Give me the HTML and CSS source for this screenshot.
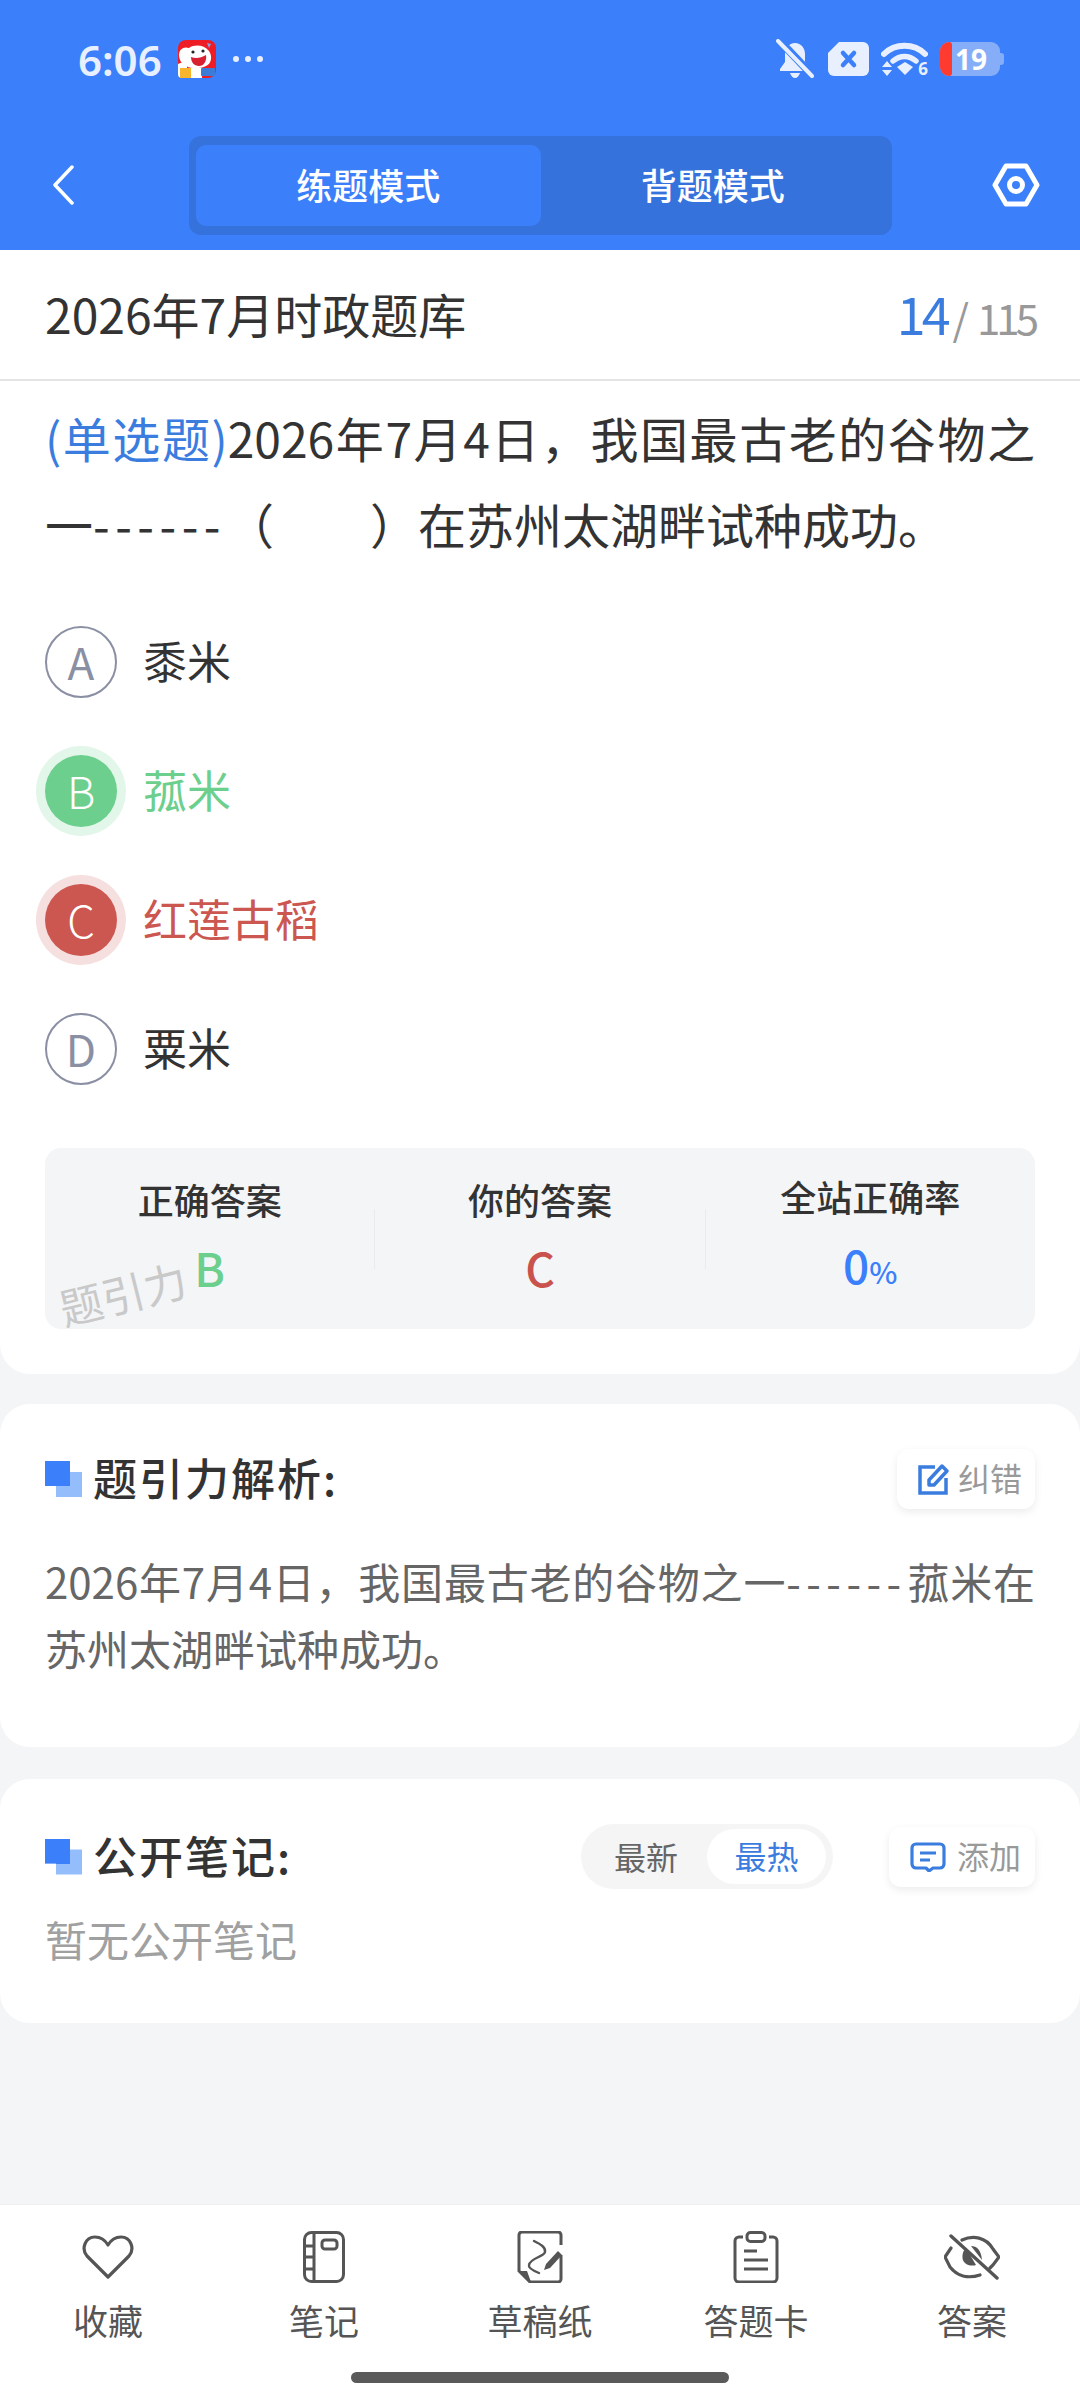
FILE: index.html
```html
<!DOCTYPE html>
<html>
  <head>
    <title>练题模式</title>
    <link rel="stylesheet" href="styles.css">
  </head>
  <body>
    <div class="page">
      <div class="header">
        <div class="status-bar">
          <div class="status-left">
            <span class="time">6:06</span>
            <svg class="app-icon" width="38" height="38" viewBox="0 0 38 38">
              <rect width="38" height="38" rx="8" fill="#ee1c25"/>
              <path d="M0 24c3-2 6-2 9 0v14H4a4 4 0 0 1-4-4z" fill="#fff"/>
              <path d="M1 15c0-6 5-9 10-7 6-4 15-3 20 3 4 6 2 13-3 15-6 3-15 3-20 0-4-2-7-6-7-11z" fill="#fff"/>
              <path d="M13 17c5 2 10 1 15-2 1 6-2 11-7 11-5 0-8-4-8-9z" fill="#d92030"/>
              <circle cx="15" cy="12" r="1.6" fill="#222"/>
              <circle cx="25" cy="11" r="1.6" fill="#222"/>
              <path d="M29 3l4 1-2 4z" fill="#7fa7e8"/>
              <rect x="2" y="28" width="11" height="10" fill="#f7b52c"/>
              <rect x="13" y="28" width="11" height="10" fill="#fff"/>
              <rect x="23" y="28" width="14" height="8" rx="1" fill="#3d7bd8"/>
            </svg>
            <svg class="dots" width="32" height="8" viewBox="0 0 32 8">
              <circle cx="4" cy="4" r="3" fill="#e8f0ff"/>
              <circle cx="16" cy="4" r="3" fill="#e8f0ff"/>
              <circle cx="28" cy="4" r="3" fill="#e8f0ff"/>
            </svg>
          </div>
          <div class="status-right">
            <svg width="38" height="40" viewBox="0 0 38 40">
              <path d="M19 4c-6 0-10 5-10 11v8l-5 7v2h30v-2l-5-7v-8c0-6-4-11-10-11z" fill="#e8f0ff"/>
              <path d="M14 34h10c-1 3-3 5-5 5s-4-2-5-5z" fill="#e8f0ff"/>
              <path d="M1 -1l36 38" stroke="#3b7ffa" stroke-width="8"/>
              <path d="M2 2l34 35" stroke="#e8f0ff" stroke-width="4" stroke-linecap="round"/>
            </svg>
            <svg width="43" height="34" viewBox="0 0 43 34">
              <path d="M13 0h24a6 6 0 0 1 6 6v22a6 6 0 0 1-6 6H8a6 6 0 0 1-6-6V11z" fill="#e8f0ff"/>
              <path d="M17 11l11 12M28 11L17 23" stroke="#3b7ffa" stroke-width="4.5" stroke-linecap="round"/>
            </svg>
            <div class="wifi">
              <svg width="47" height="36" viewBox="0 0 47 36">
                <path d="M3 13c11-11 30-11 41 0" fill="none" stroke="#e8f0ff" stroke-width="6" stroke-linecap="round"/>
                <path d="M12 20c7-6 16-6 23 0" fill="none" stroke="#e8f0ff" stroke-width="5.5" stroke-linecap="round"/>
                <path d="M16 26l8-5 8 5-8 8z" fill="#e8f0ff"/>
                <path d="M1 26l5-6 5 6zM1 29l5 6 5-6z" fill="#e8f0ff"/>
              </svg>
              <span class="wifi-num">6</span>
            </div>
            <div class="battery">19</div>
          </div>
        </div>
        <div class="nav-row">
          <svg class="back" width="22" height="40" viewBox="0 0 22 40">
            <path d="M20 2L3 20l17 18" fill="none" stroke="#fff" stroke-width="3.5" stroke-linecap="round" stroke-linejoin="round"/>
          </svg>
          <div class="tabs">
            <div class="tab active">练题模式</div>
            <div class="tab">背题模式</div>
          </div>
          <svg class="gear" width="48" height="44" viewBox="0 0 48 44">
            <path d="M14 3h20l11 19-11 19H14L3 22z" fill="none" stroke="#fff" stroke-width="5" stroke-linejoin="round"/>
            <circle cx="24" cy="22" r="6.5" fill="none" stroke="#fff" stroke-width="5"/>
          </svg>
        </div>
      </div>

      <div class="main">
        <div class="card question-card">
          <div class="title-row">
            <span class="bank-name">2026年7月时政题库</span>
            <span class="progress"><b>14</b><i>/</i>115</span>
          </div>
          <div class="question">
            <span class="q-type">(单选题)</span>2026年7月4日，我国最古老的谷物之一<span class="dashes">------</span>（&emsp;&emsp;）在苏州太湖畔试种成功。
          </div>
          <div class="options">
            <div class="option"><span class="letter">A</span><span class="opt-text">黍米</span></div>
            <div class="option right"><span class="letter">B</span><span class="opt-text">菰米</span></div>
            <div class="option wrong"><span class="letter">C</span><span class="opt-text">红莲古稻</span></div>
            <div class="option"><span class="letter">D</span><span class="opt-text">粟米</span></div>
          </div>
          <div class="stats">
            <div class="stat">
              <div class="stat-label">正确答案</div>
              <div class="stat-value green">B</div>
            </div>
            <div class="stat-line"></div>
            <div class="stat">
              <div class="stat-label">你的答案</div>
              <div class="stat-value red">C</div>
            </div>
            <div class="stat-line"></div>
            <div class="stat">
              <div class="stat-label">全站正确率</div>
              <div class="stat-value blue">0<small>%</small></div>
            </div>
            <div class="watermark">题引力</div>
          </div>
        </div>

        <div class="card analysis-card">
          <div class="card-head">
            <span class="mark"></span>
            <span class="card-title">题引力解析:</span>
            <div class="mini-btn">
              <svg width="32" height="32" viewBox="0 0 32 32">
                <path d="M17 4H2v26h26V15" fill="none" stroke="#3b7ddf" stroke-width="3.5"/>
                <path d="M11 17L24 3l5 5-13 14h-5z" fill="none" stroke="#3b7ddf" stroke-width="3.5" stroke-linejoin="round"/>
              </svg>
              <span class="btn-text">纠错</span>
            </div>
          </div>
          <div class="analysis-text">2026年7月4日，我国最古老的谷物之一<span class="dashes">------</span>菰米在苏州太湖畔试种成功。</div>
        </div>

        <div class="card notes-card">
          <div class="card-head">
            <span class="mark"></span>
            <span class="card-title">公开笔记:</span>
            <div class="sort">
              <span class="sort-item">最新</span>
              <span class="sort-item on">最热</span>
            </div>
            <div class="mini-btn add">
              <svg width="36" height="30" viewBox="0 0 36 30">
                <path d="M6 2h24a4 4 0 0 1 4 4v16a4 4 0 0 1-4 4h-7l-4 3-3-3H6a4 4 0 0 1-4-4V6a4 4 0 0 1 4-4z" fill="none" stroke="#3b7ddf" stroke-width="3.2" stroke-linejoin="round"/>
                <path d="M10 11h16M10 18h10" stroke="#3b7ddf" stroke-width="3.2"/>
              </svg>
              <span class="btn-text">添加</span>
            </div>
          </div>
          <div class="empty">暂无公开笔记</div>
        </div>
      </div>

      <div class="bottom-nav">
        <div class="nav-items">
          <div class="nav-item">
            <div class="nav-icon">
              <svg width="52" height="44" viewBox="0 0 52 44">
                <path d="M26 42L5 21C-1 14 3 2 13 2c6 0 10 3 13 8 3-5 7-8 13-8 10 0 14 12 8 19z" fill="none" stroke="#555" stroke-width="3.2" stroke-linejoin="round"/>
              </svg>
            </div>
            <span>收藏</span>
          </div>
          <div class="nav-item">
            <div class="nav-icon">
              <svg width="42" height="52" viewBox="0 0 42 52">
                <rect x="1.5" y="1.5" width="39" height="49" rx="7" fill="none" stroke="#555" stroke-width="3"/>
                <path d="M11 2v48M2 15h9M2 26h9M2 38h9" stroke="#555" stroke-width="3"/>
                <rect x="19" y="9" width="15" height="9" rx="3" fill="none" stroke="#555" stroke-width="3"/>
              </svg>
            </div>
            <span>笔记</span>
          </div>
          <div class="nav-item">
            <div class="nav-icon">
              <svg width="46" height="52" viewBox="0 0 46 52">
                <path d="M44 14V4a3 3 0 0 0-3-3H5a3 3 0 0 0-3 3v36l11 11h28a3 3 0 0 0 3-3V24" fill="none" stroke="#555" stroke-width="3"/>
                <path d="M2 40h8l4 11z" fill="#555"/>
                <path d="M17 10c6 3 12 6 11 11-1 5-15 6-16 13-1 3 5 6 10 8" fill="none" stroke="#555" stroke-width="2.4" stroke-linecap="round"/>
                <path d="M29 33l12-13 4 4-12 13-6 2z" fill="#555"/>
              </svg>
            </div>
            <span>草稿纸</span>
          </div>
          <div class="nav-item">
            <div class="nav-icon">
              <svg width="46" height="52" viewBox="0 0 46 52">
                <path d="M10 6H6a4 4 0 0 0-4 4v37a4 4 0 0 0 4 4h34a4 4 0 0 0 4-4V10a4 4 0 0 0-4-4h-4" fill="none" stroke="#555" stroke-width="3"/>
                <rect x="14" y="1.5" width="18" height="9" rx="3.5" fill="none" stroke="#555" stroke-width="3"/>
                <path d="M11 20h13M11 29h24M11 38h24" stroke="#555" stroke-width="3.2"/>
              </svg>
            </div>
            <span>答题卡</span>
          </div>
          <div class="nav-item">
            <div class="nav-icon">
              <svg width="56" height="46" viewBox="0 0 56 46">
                <path d="M18 6c11-5 24-3 31 9l6 8-6 8-3 3M36 41c-12 4-23 1-30-8l-5-10 6-9" fill="none" stroke="#555" stroke-width="3.2" stroke-linecap="round"/>
                <path d="M7 2l46 42" stroke="#555" stroke-width="3.4" stroke-linecap="round"/>
                <path d="M22 14c-4 3-5 12-1 15 3 3 8 3 11 2z" fill="#555"/>
                <path d="M27 12c6 0 10 4 11 14z" fill="#555"/>
              </svg>
            </div>
            <span>答案</span>
          </div>
        </div>
        <div class="home-bar"></div>
      </div>
    </div>
  </body>
</html>
```

FILE: styles.css
```css
* {
  box-sizing: border-box;
}

body {
  margin: 0;
  font-family: "Noto Sans CJK SC", sans-serif;
  color: #333;
  background-color: #f4f5f7;
}

.page {
  display: flex;
  flex-direction: column;
  width: 1080px;
  height: 2400px;
  overflow: hidden;
}

/* header */
.header {
  height: 250px;
  background-color: #3b7ffa;
}

.status-bar {
  display: flex;
  justify-content: space-between;
  align-items: center;
  height: 118px;
  padding: 0 76px 0 78px;
}

.status-left,
.status-right {
  display: flex;
  align-items: center;
}

.status-right {
  gap: 12px;
}

.time {
  width: 100px;
  font-family: "Noto Sans", sans-serif;
  font-size: 42px;
  font-weight: 600;
  color: #e8f0ff;
}

.dots {
  margin-left: 16px;
}

.wifi {
  position: relative;
  display: flex;
}

.wifi-num {
  position: absolute;
  right: 0;
  bottom: 0;
  font-family: "Noto Sans", sans-serif;
  font-size: 17px;
  font-weight: 700;
  line-height: 17px;
  color: #e8f0ff;
}

.battery {
  position: relative;
  width: 60px;
  height: 34px;
  margin-right: 4px;
  padding-left: 15px;
  font-family: "Noto Sans", sans-serif;
  font-size: 28px;
  font-weight: 700;
  line-height: 34px;
  color: #fff;
  background-color: #86aef8;
  border-radius: 9px;
}

.battery::before {
  content: "";
  position: absolute;
  left: 0;
  top: 0;
  width: 12px;
  height: 34px;
  background-color: #ff3b30;
  border-radius: 9px 3px 3px 9px;
}

.battery::after {
  content: "";
  position: absolute;
  right: -4px;
  top: 11px;
  width: 4px;
  height: 12px;
  background-color: #86aef8;
  border-radius: 0 3px 3px 0;
}

.nav-row {
  display: flex;
  align-items: center;
  padding: 18px 40px 0 52px;
}

.back {
  margin-right: 115px;
  margin-bottom: 2px;
}

.tabs {
  display: flex;
  width: 703px;
  height: 99px;
  padding: 9px 7px;
  background-color: #3672dc;
  border-radius: 12px;
}

.tab {
  flex: 1;
  font-size: 36px;
  font-weight: 500;
  line-height: 78px;
  text-align: center;
  color: #fff;
  border-radius: 10px;
}

.tab.active {
  background-color: #3b7ffa;
}

.gear {
  margin-left: auto;
  margin-bottom: 2px;
}

/* cards */
.main {
  flex: 1;
}

.card {
  background-color: #fff;
  border-radius: 30px;
}

.question-card {
  padding: 0 45px 45px;
  border-radius: 0 0 30px 30px;
}

.title-row {
  display: flex;
  justify-content: space-between;
  align-items: center;
  height: 131px;
  margin: 0 -45px;
  padding: 0 45px 4px;
  border-bottom: 2px solid #e4e4e4;
}

.bank-name {
  font-size: 48px;
}

.progress {
  font-size: 42px;
  letter-spacing: -4px;
  color: #999;
}

.progress b {
  font-size: 52px;
  font-weight: 400;
  color: #3b7ddf;
}

.progress i {
  margin: 0 8px 0 6px;
  font-style: normal;
  letter-spacing: 0;
}

.question {
  padding-top: 13px;
  font-size: 48px;
  line-height: 86px;
  text-align: justify;
}

.q-type {
  color: #3b7ddf;
}

.dashes {
  letter-spacing: 5.5px;
}

.options {
  display: flex;
  flex-direction: column;
  gap: 39px;
  margin-top: 51px;
}

.option {
  display: flex;
  align-items: center;
  height: 90px;
  font-size: 44px;
}

.opt-text {
  padding-bottom: 4px;
}

.letter {
  display: flex;
  justify-content: center;
  align-items: center;
  width: 72px;
  height: 72px;
  margin-right: 26px;
  padding-bottom: 3px;
  font-size: 44px;
  color: #8a8fa3;
  border: 2px solid #8a8fa3;
  border-radius: 50%;
}

.option.right {
  color: #6ccf8d;
}

.option.right .letter {
  font-weight: 300;
  color: #fff;
  background-color: #6ccf8d;
  border: 0;
  box-shadow: 0 0 0 9px #e3f6ea;
}

.option.wrong {
  color: #cc5750;
}

.option.wrong .letter {
  font-weight: 300;
  color: #fff;
  background-color: #cc5750;
  border: 0;
  box-shadow: 0 0 0 9px #f5e0df;
}

.stats {
  position: relative;
  display: flex;
  align-items: center;
  height: 181px;
  margin-top: 54px;
  background-color: #f4f5f7;
  border-radius: 16px;
}

.stat {
  flex: 1;
  padding-bottom: 6px;
  text-align: center;
}

.stat-label {
  font-size: 36px;
  font-weight: 500;
  line-height: 50px;
}

.stat-value {
  margin-top: 13px;
  font-size: 46px;
  font-weight: 500;
  line-height: 60px;
}

.stat-value small {
  font-size: 30px;
}

.stat-line {
  width: 1px;
  height: 60px;
  background-color: #eaebee;
}

.green {
  color: #6ccf8d;
}

.red {
  color: #c9524c;
}

.blue {
  color: #3b7ffa;
}

.watermark {
  position: absolute;
  left: 13px;
  bottom: 6px;
  font-size: 43px;
  color: #c9c9c9;
  transform: rotate(-14deg);
}

.analysis-card {
  margin-top: 30px;
  padding: 45px 45px 66px;
}

.notes-card {
  margin-top: 32px;
  padding: 45px 45px 54px;
}

.card-head {
  display: flex;
  align-items: center;
  height: 60px;
}

.notes-card .card-head {
  height: 65px;
}

.mark {
  width: 37px;
  height: 36px;
  margin-right: 11px;
  background-color: #93bdfb;
  background-image: linear-gradient(#3b7ffa, #3b7ffa);
  background-repeat: no-repeat;
  background-size: 25px 25px;
  clip-path: polygon(0 0, 25px 0, 25px 11px, 100% 11px, 100% 100%, 11px 100%, 11px 25px, 0 25px);
}

.card-title {
  padding-bottom: 4px;
  font-size: 44px;
  font-weight: 500;
  letter-spacing: 2px;
}

.mini-btn {
  display: flex;
  align-items: center;
  gap: 8px;
  height: 60px;
  margin-left: auto;
  padding: 0 13px 0 21px;
  font-size: 32px;
  color: #999;
  background-color: #fff;
  border-radius: 12px;
  box-shadow: 0 3px 8px rgba(0, 0, 0, 0.08);
}

.mini-btn.add {
  gap: 11px;
  margin-left: 56px;
  padding-right: 14px;
}

.btn-text {
  padding-bottom: 4px;
}

.analysis-text {
  margin-top: 38px;
  font-size: 42px;
  line-height: 67px;
  text-align: justify;
  color: #666;
}

.sort {
  display: flex;
  align-items: center;
  width: 252px;
  height: 65px;
  margin-left: auto;
  padding: 0 7px 0 33px;
  background-color: #f5f5f5;
  border-radius: 33px;
}

.sort-item {
  padding-bottom: 2px;
  font-size: 32px;
  color: #666;
}

.sort-item.on {
  width: 119px;
  height: 55px;
  margin-left: 29px;
  padding: 0;
  line-height: 52px;
  text-align: center;
  color: #3b7ddf;
  background-color: #fff;
  border-radius: 28px;
}

.empty {
  margin-top: 20px;
  font-size: 42px;
  line-height: 60px;
  color: #a0a0a0;
}

/* bottom bar */
.bottom-nav {
  display: flex;
  flex-direction: column;
  align-items: center;
  height: 196px;
  padding-top: 24px;
  background-color: #fff;
  border-top: 1px solid #eee;
}

.nav-items {
  display: grid;
  grid-template-columns: repeat(5, 1fr);
  width: 100%;
}

.nav-item {
  display: flex;
  flex-direction: column;
  align-items: center;
  font-size: 35px;
  line-height: 44px;
  color: #555;
}

.nav-icon {
  display: flex;
  justify-content: center;
  align-items: center;
  height: 56px;
  margin-bottom: 13px;
}

.home-bar {
  width: 378px;
  height: 11px;
  margin-top: 30px;
  background-color: #5a5a5a;
  border-radius: 6px;
}
```
